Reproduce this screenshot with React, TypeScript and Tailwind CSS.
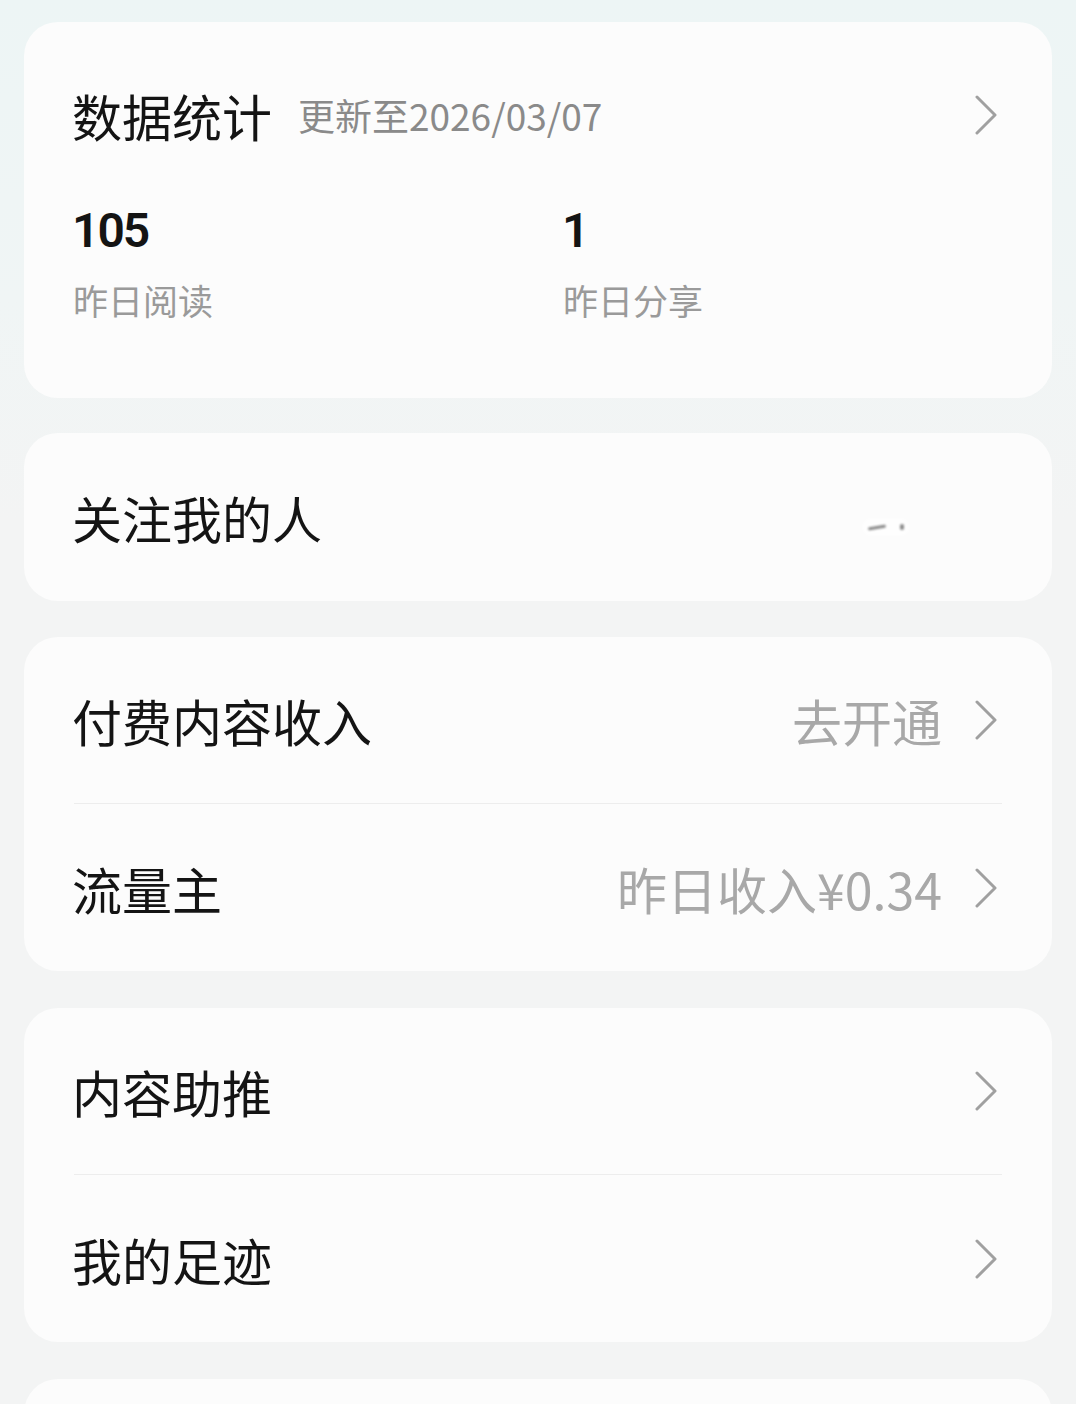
import React from "react";

const cjk = { fontFamily: '"Noto Sans CJK SC", "Noto Sans", sans-serif' };

function Chevron() {
  return (
    <svg width="24" height="40" viewBox="0 0 24 40" fill="none" className="shrink-0">
      <path d="M3 2 L21 20 L3 38" stroke="#a0a0a0" strokeWidth="3" strokeLinecap="round" strokeLinejoin="round" />
    </svg>
  );
}

function Row({ title, value, divider }: { title: string; value?: string; divider?: boolean }) {
  return (
    <div className="px-[50px]">
      <div className={`flex h-[167px] items-center ${divider ? "border-b border-[#ededed]" : ""}`}>
        <div className="-ml-[2px] text-[50px] leading-none text-[#141414]">{title}</div>
        <div className="ml-auto flex items-center gap-[32px] pr-[4px]">
          {value && <div className="text-[50px] leading-none text-[#a8a8a8]">{value}</div>}
          <Chevron />
        </div>
      </div>
    </div>
  );
}

export default function App() {
  return (
    <div
      className="min-h-[1404px] w-[1076px] overflow-hidden bg-[linear-gradient(to_bottom,#edf5f5_0px,#f0f5f5_300px,#f3f4f4_520px)] px-[24px] pt-[22px]"
      style={cjk}
    >
      {/* 数据统计 */}
      <div className="h-[376px] rounded-[34px] bg-[#fcfcfc] px-[50px] pt-[63px]">
        <div className="flex h-[60px] items-center">
          <div className="-ml-[2px] text-[50px] leading-none text-[#141414]">数据统计</div>
          <div className="ml-[26px] text-[37px] leading-none text-[#8a8a8a]">更新至2026/03/07</div>
          <div className="ml-auto pr-[4px]">
            <Chevron />
          </div>
        </div>
        <div className="mt-[58px] flex">
          <div className="w-[490px]">
            <div
              className="-ml-[2px] flex h-[56px] items-center text-[48px] font-semibold leading-none tracking-[-2px] text-[#141414]"
              style={{ fontFamily: 'Roboto, "Noto Sans", sans-serif' }}
            >
              105
            </div>
            <div className="-ml-[1px] mt-[20px] flex h-[40px] items-center text-[35px] leading-none text-[#9a9a9a]">昨日阅读</div>
          </div>
          <div>
            <div
              className="-ml-[2px] flex h-[56px] items-center text-[48px] font-semibold leading-none tracking-[-2px] text-[#141414]"
              style={{ fontFamily: 'Roboto, "Noto Sans", sans-serif' }}
            >
              1
            </div>
            <div className="-ml-[1px] mt-[20px] flex h-[40px] items-center text-[35px] leading-none text-[#9a9a9a]">昨日分享</div>
          </div>
        </div>
      </div>

      {/* 关注我的人 */}
      <div className="mt-[35px] flex h-[168px] items-center rounded-[34px] bg-[#fcfcfc] px-[50px]">
        <div className="-ml-[2px] text-[50px] leading-none text-[#141414]">关注我的人</div>
        <div className="ml-auto mr-[92px] mt-[20px] flex items-center gap-[14px] rounded-[20px] bg-white/60 px-[6px] py-[6px] blur-[1px]">
          <div className="h-[3px] w-[18px] -rotate-[10deg] rounded-full bg-[#8a8a8a]" />
          <div className="h-[6px] w-[4px] rounded-sm bg-[#8a8a8a]" />
        </div>
      </div>

      {/* 付费内容收入 / 流量主 */}
      <div className="mt-[36px] rounded-[34px] bg-[#fcfcfc]">
        <Row title="付费内容收入" value="去开通" divider />
        <Row title="流量主" value="昨日收入¥0.34" />
      </div>

      {/* 内容助推 / 我的足迹 */}
      <div className="mt-[37px] rounded-[34px] bg-[#fcfcfc]">
        <Row title="内容助推" divider />
        <Row title="我的足迹" />
      </div>

      {/* next card (cut off) */}
      <div className="mt-[37px] h-[200px] rounded-[34px] bg-[#fcfcfc]" />
    </div>
  );
}
